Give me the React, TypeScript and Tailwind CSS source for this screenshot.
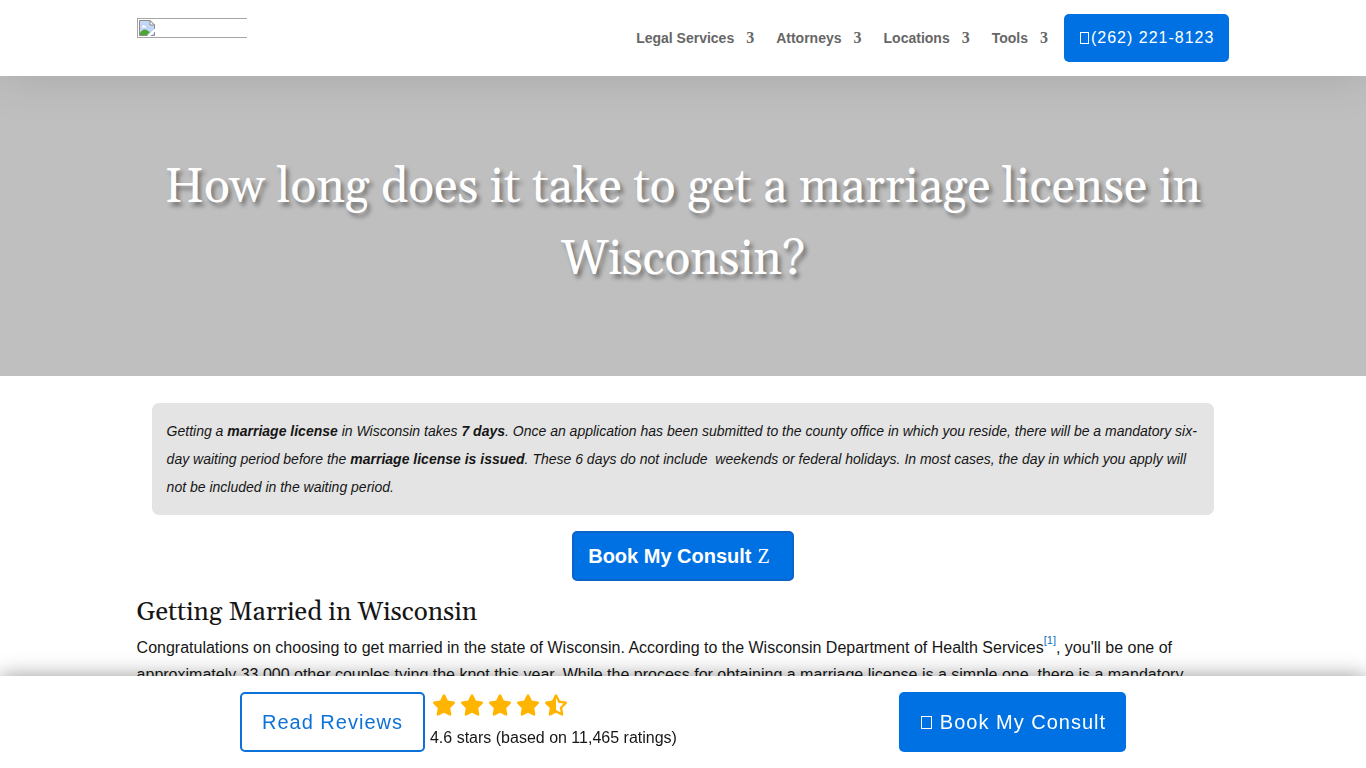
import { FaStar, FaStarHalfStroke } from "react-icons/fa6";

const menu = ["Legal Services", "Attorneys", "Locations", "Tools"];

const Header: React.FC = () => {
    return (
        <header className="relative z-10 bg-white shadow-[0_0_50px_rgba(0,0,0,0.13)]">
            <div className="w-4/5 h-[76px] mx-auto flex justify-between">
                <a href="#" aria-label="Home" className="mt-[18px] h-5 w-[110px] border border-r-0 border-[#a5a5a5] pl-px pt-px">
                    <svg width="16" height="16" viewBox="0 0 16 16">
                        <path d="M.5 .5h10.500l4.500 4.500v10.500H.5z" fill="#c4d6f6" stroke="#8b8b8b" />
                        <path d="M11 .5v4.500h4.500z" fill="#fff" stroke="#8b8b8b" />
                        <path d="M3 6.500a1.500 1.500 0 0 1 2.600-.8A1.300 1.300 0 0 1 7 7.500H3z" fill="#fff" />
                        <path d="M1 15v-2c2-3.500 5-4.500 8-2l2 1-3 3z" fill="#4ea437" />
                        <path d="M8 16L16 8.500v3L11.500 16z" fill="#fff" />
                    </svg>
                </a>
                <div className="flex items-center">
                    <nav className="flex gap-[22px] mr-4 text-sm font-bold text-[#666]">
                        {menu.map((name) => (
                            <a key={name} href="#" className="flex items-center gap-3">
                                {name}
                                <span className="font-['Liberation_Serif',serif] text-base leading-5">3</span>
                            </a>
                        ))}
                    </nav>
                    <a href="tel:2622218123" className="flex items-center h-12 pl-4 pr-[15px] rounded-[5px] bg-[#0071e3] text-white text-base tracking-[1px]">
                        <span className="w-[9px] h-3 mr-[2px] border border-white"></span>
                        (262) 221-8123
                    </a>
                </div>
            </div>
        </header>
    );
};

const StickyBar: React.FC = () => {
    return (
        <div className="fixed bottom-0 inset-x-0 z-20 bg-white shadow-[0_0_20px_rgba(0,0,0,0.4)]">
            <div className="flex justify-between px-60 py-4">
                <div className="flex gap-[5px]">
                    <a href="#" className="flex items-center h-[60px] px-5 rounded-[5px] border-2 border-[#0c71d8] text-[#0c71d8] text-xl tracking-[1px]">
                        Read Reviews
                    </a>
                    <div>
                        <div className="flex items-center h-[26px] pl-[2px] gap-1 text-[#ffb400]">
                            <FaStar size={24} />
                            <FaStar size={24} />
                            <FaStar size={24} />
                            <FaStar size={24} />
                            <FaStarHalfStroke size={24} />
                        </div>
                        <p className="pt-[6px] text-base leading-[27px]">4.6 stars (based on 11,465 ratings)</p>
                    </div>
                </div>
                <a href="#" className="flex items-center h-[60px] pl-[22px] pr-5 rounded-[5px] bg-[#0071e3] text-white text-xl tracking-[1px]">
                    <span className="w-[11px] h-[13px] mr-2 border border-white"></span>
                    Book My Consult
                </a>
            </div>
        </div>
    );
};

export default function App() {
    return (
        <div className="bg-white font-['Liberation_Sans',Arial,sans-serif] text-[#161616]">
            <Header />
            <section className="bg-[#bfbfbf] pt-[76px] pb-20">
                <h1 className="w-4/5 mx-auto text-center text-white font-[Georgia,Gelasio,serif] text-5xl leading-[72px] [text-shadow:3px_4px_4px_rgba(0,0,0,0.4)]">
                    How long does it take to get a marriage license in Wisconsin?
                </h1>
            </section>
            <main className="w-4/5 mx-auto pt-[27px]">
                <p className="mx-[15px] px-[15px] py-[14px] rounded-[7px] bg-[#e4e4e4] text-sm leading-7 italic">
                    Getting a <strong>marriage license</strong> in Wisconsin takes <strong>7 days</strong>. Once an
                    application has been submitted to the county office in which you reside, there will be a mandatory
                    six-day waiting period before the <strong>marriage license is issued</strong>. These 6 days do not
                    include&nbsp; weekends or federal holidays. In most cases, the day in which you apply will not be
                    included in the waiting period.
                </p>
                <div className="flex justify-center pt-4">
                    <a href="#" className="flex items-center gap-[6px] h-[50px] pl-[14px] pr-[22px] rounded-[5px] border-2 border-[#0c64c8] bg-[#0071e3] text-white text-xl font-bold">
                        Book My Consult
                        <span className="font-['Liberation_Serif',serif] font-normal">Z</span>
                    </a>
                </div>
                <h2 className="pt-[19px] font-[Georgia,Gelasio,serif] text-[26px] leading-[26px]">Getting Married in Wisconsin</h2>
                <p className="pt-2 text-base leading-[27px]">
                    Congratulations on choosing to get married in the state of Wisconsin. According to the Wisconsin
                    Department of Health Services
                    <sup className="static align-[9px] text-[11px] leading-[0]">
                        <a href="#" className="text-[#0c71c3]">[1]</a>
                    </sup>
                    , you'll be one of approximately 33,000 other couples tying the knot this year. While the process for
                    obtaining a marriage license is a simple one, there is a mandatory
                </p>
            </main>
            <StickyBar />
        </div>
    );
}
